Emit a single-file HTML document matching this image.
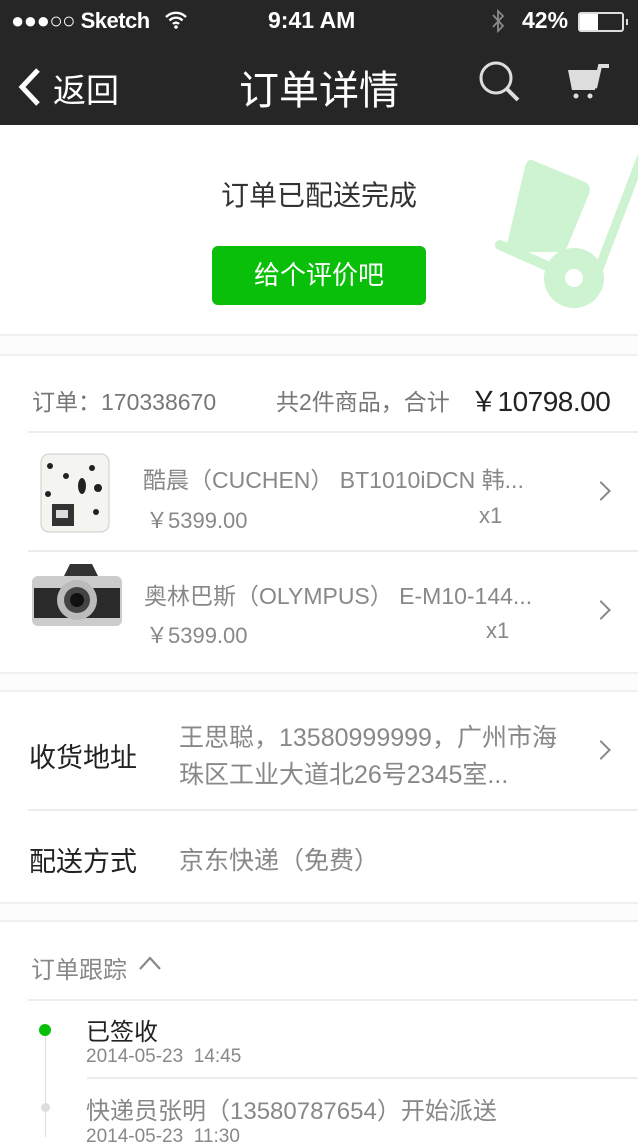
<!DOCTYPE html>
<html><head><meta charset="utf-8"><style>
*{margin:0;padding:0;box-sizing:border-box}
body{width:638px;height:1137px;overflow:hidden;background:#fff;position:relative;font-family:"Liberation Sans","Noto Sans CJK SC",sans-serif}
.a{position:absolute;white-space:nowrap}
.hl{position:absolute;height:2px;background:#ececec;right:0}
.chev{position:absolute;width:14px;height:14px;border-right:2.5px solid #888;border-top:2.5px solid #888;transform:rotate(45deg)}
</style></head><body>
<div class="a" style="left:0;top:0;width:638px;height:125px;background:#262626"></div>
<div class="a" style="left:11px;top:8px;color:#fff;font-size:22px;font-weight:bold;letter-spacing:-0.5px">●●●<span style="font-weight:normal">○○</span> Sketch</div>
<svg class="a" style="left:164px;top:10px" width="24" height="20" viewBox="0 0 24 20"><path d="M2 7a14 14 0 0 1 20 0M5.5 10.5a9 9 0 0 1 13 0M9 14a4 4 0 0 1 6 0" stroke="#fff" stroke-width="2.4" fill="none"/><circle cx="12" cy="17" r="1.8" fill="#fff"/></svg>
<div class="a" style="left:268px;top:7px;color:#fff;font-size:23px;font-weight:bold">9:41 AM</div>
<svg class="a" style="left:490px;top:9px" width="16" height="24" viewBox="0 0 16 24"><path d="M3 6l10 11-5 5V2l5 5L3 18" stroke="#888" stroke-width="1.8" fill="none"/></svg>
<div class="a" style="left:522px;top:7px;color:#fff;font-size:23px;font-weight:bold">42%</div>
<div class="a" style="left:578px;top:12px;width:46px;height:20px;border:2px solid #ddd;border-radius:3px"><div style="width:18px;height:16px;background:#fff"></div></div>
<div class="a" style="left:626px;top:19px;width:2px;height:6px;background:#ddd"></div>
<svg class="a" style="left:14px;top:67px" width="28" height="40" viewBox="0 0 28 40"><path d="M24 3L8 20l16 17" stroke="#fff" stroke-width="5" fill="none"/></svg>
<div class="a" style="left:53px;top:64px;color:#fff;font-size:33px">返回</div>
<div class="a" style="left:239px;top:58px;color:#fff;font-size:40px">订单详情</div>
<svg class="a" style="left:478px;top:60px" width="44" height="42" viewBox="0 0 44 42"><circle cx="18" cy="18" r="15" stroke="#ddd" stroke-width="3" fill="none"/><path d="M29 29l11 11" stroke="#ddd" stroke-width="4"/></svg>
<svg class="a" style="left:562px;top:62px" width="50" height="40" viewBox="0 0 50 40"><path d="M6 8h30l-3 20H10z" fill="#ddd"/><path d="M33 26L38 4h9" stroke="#ddd" stroke-width="4" fill="none"/><circle cx="14" cy="34" r="2.5" fill="#ddd"/><circle cx="28" cy="34" r="2.5" fill="#ddd"/></svg>

<svg class="a" style="left:480px;top:126px" width="158" height="210" viewBox="480 126 158 210">
<path d="M532 160 L585 182 Q592 186 589 194 L565 252 L515 252 Q505 250 508 240 L525 167 Q528 158 532 160Z" fill="#cdf3d0"/>
<path d="M645 148 L587 300" stroke="#cdf3d0" stroke-width="9"/>
<path d="M500 245 L545 265" stroke="#cdf3d0" stroke-width="10" stroke-linecap="round"/>
<circle cx="574" cy="278" r="30" fill="#cdf3d0"/><circle cx="574" cy="278" r="9" fill="#fff"/></svg>
<div class="a" style="left:221px;top:174px;color:#333;font-size:28px">订单已配送完成</div>
<div class="a" style="left:212px;top:246px;width:214px;height:59px;background:#0abf0a;border-radius:6px;color:#fff;font-size:26px;text-align:center;line-height:59px">给个评价吧</div>

<div class="a" style="left:0;top:334px;width:638px;height:22px;background:#fcfcfc;border-top:2px solid #f0f0f0;border-bottom:2px solid #f0f0f0"></div>
<div class="a" style="left:32px;top:383px;color:#777;font-size:23px">订单：170338670</div>
<div class="a" style="left:276px;top:383px;color:#777;font-size:23px">共2件商品，合计</div>
<div class="a" style="left:470px;top:380px;color:#222;font-size:28px;letter-spacing:-0.5px">￥10798.00</div>
<div class="hl" style="left:28px;top:431px"></div>

<svg class="a" style="left:36px;top:446px" width="80" height="90" viewBox="0 0 80 90"><rect x="5" y="8" width="68" height="78" rx="8" fill="#f4f4f0" stroke="#ccc"/><g fill="#222"><circle cx="14" cy="20" r="3"/><circle cx="30" cy="30" r="3"/><circle cx="56" cy="22" r="3"/><circle cx="62" cy="42" r="4"/><ellipse cx="46" cy="40" rx="4" ry="8"/><circle cx="12" cy="48" r="3"/><circle cx="60" cy="66" r="3"/><circle cx="20" cy="66" r="2"/></g><rect x="16" y="58" width="22" height="22" fill="#333"/><rect x="20" y="64" width="12" height="8" fill="#ddd"/></svg>
<div class="a" style="left:143px;top:461px;color:#888;font-size:23px">酷晨（CUCHEN） BT1010iDCN 韩...</div>
<div class="a" style="left:146px;top:503px;color:#888;font-size:22px">￥5399.00</div>
<div class="a" style="left:479px;top:503px;color:#888;font-size:22px">x1</div>
<div class="chev" style="left:594px;top:484px"></div>
<div class="hl" style="left:28px;top:550px"></div>

<svg class="a" style="left:30px;top:562px" width="96" height="70" viewBox="0 0 96 70"><rect x="2" y="14" width="90" height="50" rx="6" fill="#ccc"/><rect x="4" y="26" width="86" height="30" fill="#2a2a2a"/><path d="M34 14l6-12h22l6 12z" fill="#333"/><circle cx="47" cy="38" r="20" fill="#bbb"/><circle cx="47" cy="38" r="13" fill="#444"/><circle cx="47" cy="38" r="7" fill="#111"/></svg>
<div class="a" style="left:144px;top:577px;color:#888;font-size:23px">奥林巴斯（OLYMPUS） E-M10-144...</div>
<div class="a" style="left:146px;top:618px;color:#888;font-size:22px">￥5399.00</div>
<div class="a" style="left:486px;top:618px;color:#888;font-size:22px">x1</div>
<div class="chev" style="left:594px;top:603px"></div>

<div class="a" style="left:0;top:672px;width:638px;height:20px;background:#fcfcfc;border-top:2px solid #f0f0f0;border-bottom:2px solid #f0f0f0"></div>
<div class="a" style="left:29px;top:736px;color:#222;font-size:27px">收货地址</div>
<div class="a" style="left:179px;top:720px;color:#888;font-size:25px;line-height:37px">王思聪，13580999999，广州市海<br>珠区工业大道北26号2345室...</div>
<div class="chev" style="left:594px;top:743px"></div>
<div class="hl" style="left:28px;top:809px"></div>
<div class="a" style="left:29px;top:840px;color:#222;font-size:27px">配送方式</div>
<div class="a" style="left:179px;top:841px;color:#888;font-size:25px">京东快递（免费）</div>

<div class="a" style="left:0;top:902px;width:638px;height:20px;background:#fcfcfc;border-top:2px solid #f0f0f0;border-bottom:2px solid #f0f0f0"></div>
<div class="a" style="left:31px;top:950px;color:#888;font-size:24px">订单跟踪</div>
<svg class="a" style="left:138px;top:955px" width="24" height="16" viewBox="0 0 24 16"><path d="M2 14L12 3l10 11" stroke="#888" stroke-width="2.2" fill="none"/></svg>
<div class="hl" style="left:28px;top:999px"></div>
<div class="a" style="left:45px;top:1031px;width:1px;height:106px;background:#ddd"></div>
<div class="a" style="left:39px;top:1024px;width:12px;height:12px;border-radius:50%;background:#0abf0a"></div>
<div class="a" style="left:86px;top:1012px;color:#222;font-size:24px">已签收</div>
<div class="a" style="left:86px;top:1046px;color:#888;font-size:19px">2014-05-23&nbsp; 14:45</div>
<div class="hl" style="left:87px;top:1077px"></div>
<div class="a" style="left:41px;top:1103px;width:9px;height:9px;border-radius:50%;background:#ddd"></div>
<div class="a" style="left:86px;top:1091px;color:#888;font-size:24px">快递员张明（13580787654）开始派送</div>
<div class="a" style="left:86px;top:1126px;color:#888;font-size:19px">2014-05-23&nbsp; 11:30</div>
</body></html>
